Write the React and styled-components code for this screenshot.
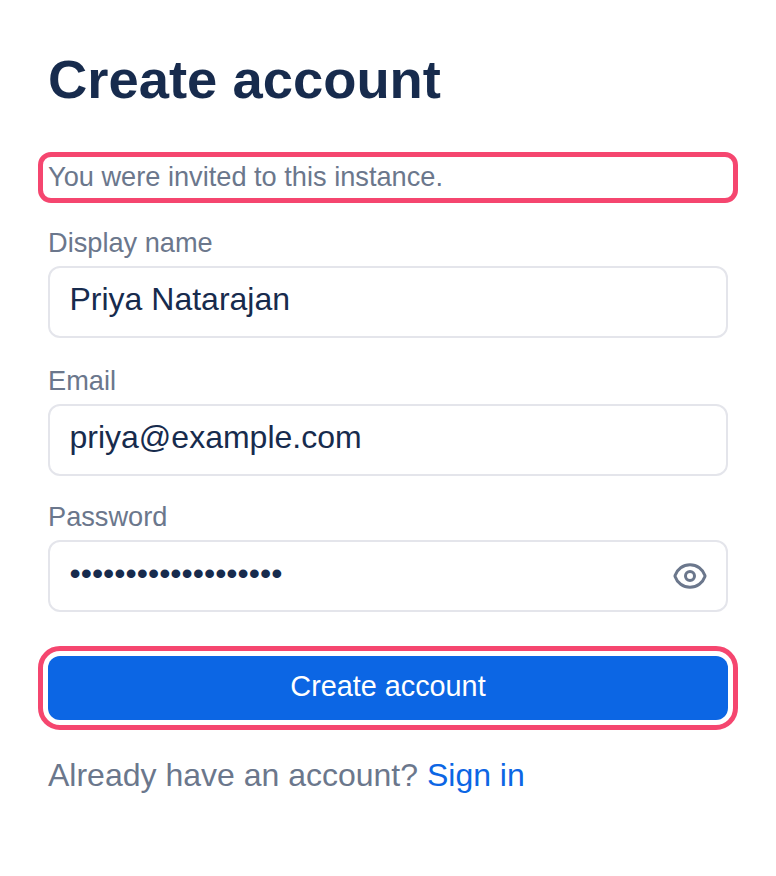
import React from "react";
import styled, { createGlobalStyle } from "styled-components";

const GlobalStyle = createGlobalStyle`
  * {
    box-sizing: border-box;
  }
  body {
    margin: 0;
    background: #ffffff;
    font-family: "Liberation Sans", Arial, sans-serif;
  }
`;

export default function App() {
  return (
    <Page>
      <GlobalStyle />
      <Title>Create account</Title>
      <Notice>You were invited to this instance.</Notice>
      <Field $gap={27}>
        <Label>Display name</Label>
        <InputWrap>
          <Input type="text" defaultValue="Priya Natarajan" />
        </InputWrap>
      </Field>
      <Field $gap={25}>
        <Label>Email</Label>
        <InputWrap>
          <Input type="email" defaultValue="priya@example.com" />
        </InputWrap>
      </Field>
      <Field $gap={44}>
        <Label>Password</Label>
        <InputWrap>
          <Input type="password" defaultValue="correcthorsebattery" />
          <EyeButton type="button">
            <svg width="36" height="36" viewBox="0 0 24 24" fill="none" stroke="currentColor" strokeWidth="2" strokeLinecap="round" strokeLinejoin="round">
              <path d="M2.036 12.322a1.012 1.012 0 0 1 0-.639C3.423 7.51 7.36 4.5 12 4.5c4.638 0 8.573 3.007 9.963 7.178.07.207.07.431 0 .639C20.577 16.49 16.64 19.5 12 19.5c-4.638 0-8.573-3.007-9.963-7.178z" />
              <path d="M15 12a3 3 0 1 1-6 0 3 3 0 0 1 6 0z" />
            </svg>
          </EyeButton>
        </InputWrap>
      </Field>
      <Submit type="button">Create account</Submit>
      <Footer>
        Already have an account? <FooterLink href="#">Sign in</FooterLink>
      </Footer>
    </Page>
  );
}

const Page = styled.main`
  display: flex;
  flex-direction: column;
  width: 776px;
  min-height: 876px;
  padding: 48px;
`;

const Title = styled.h1`
  margin: 0 0 50px;
  font-size: 54.4px;
  line-height: 64px;
  font-weight: 700;
  color: #172b4d;
`;

const Notice = styled.p`
  margin: 0 0 34px;
  padding-bottom: 1px;
  height: 31px;
  font-size: 27.2px;
  line-height: 30px;
  color: #6b778c;
  border-radius: 3px;
  outline: 5px solid #f5466f;
  outline-offset: 5px;
`;

const Field = styled.div`
  display: flex;
  flex-direction: column;
  margin-bottom: ${props => props.$gap}px;
`;

const Label = styled.label`
  font-size: 27.2px;
  line-height: 32px;
  margin-bottom: 7px;
  color: #6b778c;
`;

const InputWrap = styled.div`
  position: relative;
`;

const Input = styled.input`
  display: block;
  width: 100%;
  height: 72px;
  padding: 0 19.5px 6px;
  font-family: inherit;
  font-size: 32px;
  color: #172b4d;
  background: #ffffff;
  border: 2px solid #e4e5eb;
  border-radius: 12px;
  outline: none;
`;

const EyeButton = styled.button`
  position: absolute;
  top: 18px;
  right: 20px;
  display: flex;
  padding: 0;
  border: none;
  background: none;
  color: #6b778c;
`;

const Submit = styled.button`
  height: 64px;
  padding: 0 0 4px;
  font-family: inherit;
  font-size: 28.8px;
  color: #ffffff;
  background: #0c66e4;
  border: none;
  border-radius: 12px;
  outline: 5px solid #f5466f;
  outline-offset: 5px;
`;

const Footer = styled.p`
  margin: 35px 0 0;
  font-size: 32px;
  line-height: 40px;
  color: #6b778c;
`;

const FooterLink = styled.a`
  color: #0c66e4;
  text-decoration: none;
`;
